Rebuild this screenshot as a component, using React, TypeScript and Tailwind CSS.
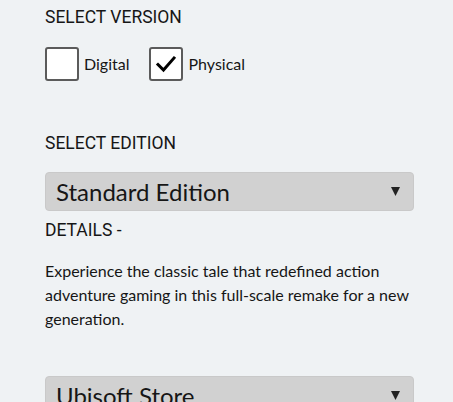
import React from "react";

const Arrow = () => (
  <svg width="9" height="9" viewBox="0 0 9 9" className="shrink-0">
    <path d="M0 0 H9 L4.5 9 Z" fill="#222" />
  </svg>
);

function Select({ label }: { label: string }) {
  return (
    <div className="flex h-[39px] w-full items-center justify-between rounded-[4px] border border-[#c9c9c9] bg-[#d1d1d1] pl-[10px] pr-[13px]">
      <span className="text-[24px] leading-[28px] text-[#161616] [font-family:Lato,sans-serif]">{label}</span>
      <Arrow />
    </div>
  );
}

function Box({ checked, label }: { checked?: boolean; label: string }) {
  return (
    <div className="flex items-center">
      <div className="flex h-[34px] w-[34px] items-center justify-center rounded-[3px] border-2 border-[#5b5b5b] bg-white">
        {checked && (
          <svg width="22" height="22" viewBox="0 0 22 22">
            <path d="M3 11.5 L8.5 17 L19 5" fill="none" stroke="#000" strokeWidth="3" strokeLinecap="square" strokeLinejoin="miter" />
          </svg>
        )}
      </div>
      <span className="ml-[5px] text-[16px] leading-[20px] text-[#161616] [font-family:Lato,sans-serif]">{label}</span>
    </div>
  );
}

export default function App() {
  return (
    <div className="min-h-screen bg-[#eff2f4] pl-[45px] pr-[39px] pt-[5px] text-[#161616]">
      <p className="text-[17.5px] leading-[24px] [font-family:Roboto,Arial,sans-serif]">SELECT VERSION</p>
      <div className="mt-[18px] flex items-center gap-[20px]">
        <Box label="Digital" />
        <Box checked label="Physical" />
      </div>
      <p className="mt-[50px] text-[17.5px] leading-[24px] [font-family:Roboto,Arial,sans-serif]">SELECT EDITION</p>
      <div className="mt-[17px]">
        <Select label="Standard Edition" />
      </div>
      <p className="mt-[7px] text-[17.5px] leading-[24px] [font-family:Roboto,Arial,sans-serif]">DETAILS -</p>
      <p className="mt-[17px] text-[16px] leading-[24px] [font-family:Lato,sans-serif]">
        Experience the classic tale that redefined action adventure gaming in this full-scale remake for a new generation.
      </p>
      <div className="mt-[45px]">
        <Select label="Ubisoft Store" />
      </div>
    </div>
  );
}
